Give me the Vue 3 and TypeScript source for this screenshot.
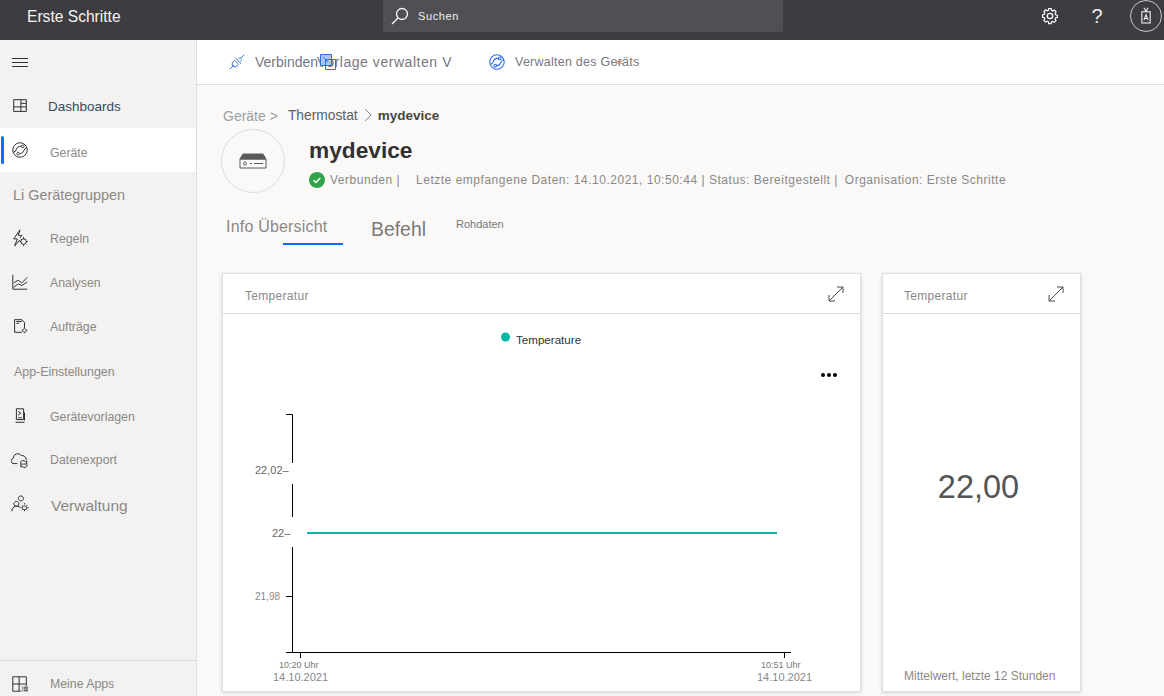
<script setup lang="ts">
interface NavItem {
	label: string;
	kind: "link" | "group" | "section";
	active?: boolean;
	labelClass?: string;
	icon?: string[];
}

const navItems: NavItem[] = [
	{
		label: "Dashboards",
		kind: "link",
		labelClass: "nav-dark",
		icon: ["M3 3h14v13H3z", "M3 11h14", "M11 3v13", "M11 7h6"],
	},
	{
		label: "Geräte",
		kind: "link",
		active: true,
		labelClass: "nav-active",
		icon: [
			"M10 2a8 8 0 1 0 .01 0",
			"M2.500 12.500c4.500 0 2.500-6.500 7-6.500h2",
			"M17.500 7.500c-4 0-2.500 6.500-7 6.500h-1",
			"M13 4.500a1.500 1.500 0 1 0 .01 0",
			"M8 12.500a1.500 1.500 0 1 0 .01 0",
		],
	},
	{ label: "Li Gerätegruppen", kind: "group" },
	{
		label: "Regeln",
		kind: "link",
		icon: ["M10 1L3 11h4l-3 8 6-7", "M10 1L8 7h4l-2 3", "M14 11a3 3 0 1 0 .01 0", "M14 9v2M14 17v2M9.500 14h2M16.500 14h2M11 11l1 1M16 16l1 1M17 11l-1 1M11 17l1-1"],
	},
	{
		label: "Analysen",
		kind: "link",
		icon: ["M2 2v16h16", "M3 11l5-3 4 3 6-6", "M3 16l5-4 4 2 6-4"],
	},
	{
		label: "Aufträge",
		kind: "link",
		icon: ["M4 17V3h8l3 3v6", "M4 17h8", "M6 5h6M6 7h3", "M15 13a2 2 0 1 0 .01 0", "M15 11v1M15 17v1M12 15h1M17 15h1"],
	},
	{ label: "App-Einstellungen", kind: "section" },
	{
		label: "Gerätevorlagen",
		kind: "link",
		labelClass: "nav-shift",
		icon: ["M6 2h8v12H6z", "M5 17h10", "M8 5l3 2-3 2", "M8 12h4", "M15 6v9"],
	},
	{
		label: "Datenexport",
		kind: "link",
		labelClass: "nav-export",
		icon: ["M7 14H4a3 3 0 0 1-1.500-6 5 5 0 0 1 9-3 5 5 0 0 1 5.500 5", "M10.500 14a3 3 0 0 1 5.500-2l1.500-1v3.500h-3", "M18 15a3 3 0 0 1-5.500 2l-1.500 1v-3.500h3"],
	},
	{
		label: "Verwaltung",
		kind: "link",
		labelClass: "nav-big",
		icon: ["M6 7a2.800 2.800 0 1 0 .01 0", "M1 18c0-6 7-7 9-4", "M11 1a2.800 2.800 0 1 0 .01 0", "M15 12a2.200 2.200 0 1 0 .01 0", "M15 9v1.500M15 16.500V18M10.500 14H12M18 14h1.500M12 11l1 1M17 16l1 1M18 11l-1 1M12 17l1-1"],
	},
];

const statusParts = ["Letzte empfangene Daten: 14.10.2021, 10:50:44", "Status: Bereitgestellt"];
</script>

<template>
	<div class="page">
		<header class="topbar">
			<div class="brand">Erste Schritte</div>
			<div class="search">
				<svg class="search-icon" viewBox="0 0 20 20">
					<circle cx="12" cy="8" r="5.500" />
					<path d="M8 12l-6 6" />
				</svg>
				<span>Suchen</span>
			</div>
			<div class="top-actions">
				<svg class="gear" viewBox="0 0 20 20">
					<path d="M8.500 2h3l.5 2.300 1.500.7 2-1.200 2 2.200-1.200 2 .6 1.500 2.100.5v3l-2.200.5-.6 1.500 1.200 2-2.100 2-2-1.200-1.500.6-.5 2.200h-3L8 18l-1.500-.6-2 1.200-2.100-2 1.200-2-.6-1.500L.9 12.600v-3L3 9.100l.6-1.500-1.200-2 2.100-2.100 2 1.200L8 4z" transform="translate(1 0) scale(.9)" />
					<circle cx="10" cy="10" r="3" />
				</svg>
				<span class="help">?</span>
				<div class="avatar">
					<svg viewBox="0 0 20 26">
						<path d="M4 7h12v16H4z" />
						<path d="M7 1l3 5 3-5" />
						<path d="M7 19l3-8 3 8M8 16.500h4" />
					</svg>
				</div>
			</div>
		</header>

		<div class="body">
			<aside class="sidebar">
				<div class="nav-list">
					<div class="hamburger"><span></span><span></span><span></span></div>
					<div
						v-for="item in navItems"
						:key="item.label"
						class="nav-row"
						:class="[item.kind, { active: item.active }]"
					>
						<i v-if="item.active" class="active-bar"></i>
						<svg v-if="item.icon" class="nav-icon" viewBox="0 0 20 20">
							<path v-for="d in item.icon" :key="d" :d="d" />
						</svg>
						<span class="nav-label" :class="item.labelClass">{{ item.label }}</span>
					</div>
				</div>
				<div class="nav-row link my-apps">
					<svg class="nav-icon" viewBox="0 0 20 20">
						<path d="M2 2h15v16H2zM2 10h15M9 2v16" />
						<path class="knock" d="M11 12h9v8h-9z" />
						<path d="M12 13.500h1M14 13.500h5M12 15.500h1M14 15.500h5M12 17.500h1M14 17.500h5" />
					</svg>
					<span class="nav-label nav-apps">Meine Apps</span>
				</div>
			</aside>

			<main class="content">
				<div class="toolbar">
					<div class="tool tool-connect">
						<svg class="tool-icon" viewBox="0 0 20 20">
							<path d="M1 19l5-5M14 6l5-5M7 8l5 5-2 2a3.500 3.500 0 0 1-5-5zM8 5l7 7M12 6l2-2M14 9l2-2" />
						</svg>
						<span>Verbinden</span>
						<svg class="overlap-icon" viewBox="0 0 16 16">
							<path class="fill-blue" d="M.5.500h11v11H.5z" />
							<path d="M5.500 5.500h10v10h-10zM3 3l5 5" />
						</svg>
						<span class="tool-tight">Vorlage verwalten V</span>
					</div>
					<div class="tool tool-manage">
						<svg class="tool-icon manage-icon" viewBox="0 0 20 20">
							<circle cx="10" cy="10" r="8" />
							<path d="M2.500 12.500c4.500 0 2.500-6.500 7-6.500h2M17.500 7.500c-4 0-2.500 6.500-7 6.500h-1" />
							<circle cx="13" cy="6" r="1.500" />
							<circle cx="8" cy="14" r="1.500" />
						</svg>
						<span class="spaced">Verwalten des Geräts</span>
						<svg class="cross" viewBox="0 0 10 10"><path d="M1 3l8 4M1 7l8-4" /></svg>
					</div>
				</div>

				<div class="device">
					<div class="crumbs">
						<span class="crumb-root">Geräte &gt;</span>
						<span class="crumb-mid">Thermostat</span>
						<svg class="chevron" viewBox="0 0 8 14"><path d="M1 1l6 6-6 6" /></svg>
						<strong>mydevice</strong>
					</div>

					<div class="device-head">
						<div class="device-circle">
							<svg viewBox="0 0 28 16">
								<path class="device-top" d="M4 1h20l3 5H1z" />
								<path d="M1 6h26v9H1z" />
								<circle cx="6" cy="10.500" r="1.500" />
								<path d="M11 10.500h2M15 10.500h9" />
							</svg>
						</div>
						<div class="device-info">
							<h1>mydevice</h1>
							<div class="status">
								<svg class="check" viewBox="0 0 16 16">
									<circle cx="8" cy="8" r="8" />
									<path d="M4.500 8.300l2.400 2.200 4.400-4.500" />
								</svg>
								<span class="status-connected">Verbunden |</span>
								<span class="status-rest">
									<template v-for="part in statusParts" :key="part">{{ part }} | </template>
									<span class="status-org">Organisation: Erste Schritte</span>
								</span>
							</div>
						</div>
					</div>

					<div class="tabs">
						<div class="tab-info">
							<span>Info Übersicht</span>
							<i></i>
						</div>
						<span class="tab-cmd">Befehl</span>
						<span class="tab-raw">Rohdaten</span>
					</div>
				</div>

				<div class="cards">
					<section class="card card-chart">
						<div class="card-head">
							<span>Temperatur</span>
							<svg class="expand" viewBox="0 0 16 16"><path d="M1 15L15 1M9 1h6v6M1 9v6h6" /></svg>
						</div>
						<div class="chart-body">
							<svg class="chart" viewBox="1 0 636 378" width="636" height="378">
								<circle cx="283.500" cy="23" r="4.500" fill="#00b7a8" />
								<text x="294" y="30" class="legend">Temperature</text>
								<g fill="#000">
									<circle cx="601" cy="61" r="2" />
									<circle cx="607" cy="61" r="2" />
									<circle cx="613" cy="61" r="2" />
								</g>
								<g stroke="#000" stroke-width="1" fill="none">
									<path d="M64 100.500h6.500V149M70.500 170v33M70.500 233v105M64 282.500h6M64 338.500h505M78.500 338v6M562.500 338v6" />
								</g>
								<path d="M85 219h470" stroke="#00b7a8" stroke-width="2" />
								<text x="33" y="160" class="tick">22,02–</text>
								<text x="50" y="223" class="tick">22–</text>
								<text x="33" y="286" class="tick-small">21,98</text>
								<text x="57" y="354" class="time">10:20 Uhr</text>
								<text x="51" y="367" class="date">14.10.2021</text>
								<text x="539" y="354" class="time">10:51 Uhr</text>
								<text x="535" y="367" class="date">14.10.2021</text>
							</svg>
						</div>
					</section>

					<section class="card card-kpi">
						<div class="card-head">
							<span>Temperatur</span>
							<svg class="expand" viewBox="0 0 16 16"><path d="M1 15L15 1M9 1h6v6M1 9v6h6" /></svg>
						</div>
						<div class="kpi-value">22,00</div>
						<div class="kpi-foot">Mittelwert, letzte 12 Stunden</div>
					</section>
				</div>
			</main>
		</div>
	</div>
</template>

<style scoped>
.page {
	width: 1164px;
	height: 696px;
	overflow: hidden;
	display: flex;
	flex-direction: column;
	font-family: "Liberation Sans", Arial, sans-serif;
	color: #605e5c;
}

.topbar {
	height: 40px;
	flex: none;
	display: flex;
	align-items: flex-start;
	background: #3c3c41;
	color: #fff;
}

.brand {
	width: 383px;
	padding-left: 27px;
	box-sizing: border-box;
	font-size: 15.600px;
	line-height: 33px;
	color: #f4f4f4;
}

.search {
	width: 400px;
	height: 32px;
	display: flex;
	align-items: center;
	background: #4f4f54;
	border-radius: 0 0 2px 2px;
	font-size: 11px;
	letter-spacing: 0.6px;
	color: #f2f2f2;
}

.search-icon {
	width: 20px;
	height: 20px;
	margin: 0 8px 0 7px;
	fill: none;
	stroke: #fff;
	stroke-width: 1.300;
}

.top-actions {
	margin-left: auto;
	height: 32px;
	display: flex;
	align-items: center;
}

.gear {
	width: 18px;
	height: 18px;
	fill: none;
	stroke: #fff;
	stroke-width: 1.400;
}

.help {
	width: 16px;
	margin-left: 30px;
	text-align: center;
	font-size: 20px;
	font-weight: 400;
	color: #eee;
}

.avatar {
	width: 32px;
	height: 32px;
	margin: 0 2px 0 25px;
	box-sizing: border-box;
	border: 1px solid #c8c8c8;
	border-radius: 50%;
	display: flex;
	align-items: center;
	justify-content: center;
}

.avatar svg {
	width: 14px;
	height: 18px;
	fill: none;
	stroke: #fff;
	stroke-width: 1.500;
}

.body {
	flex: 1;
	display: flex;
	min-height: 0;
}

.sidebar {
	width: 197px;
	flex: none;
	box-sizing: border-box;
	display: flex;
	flex-direction: column;
	justify-content: space-between;
	background: #f3f2f1;
	border-right: 1px solid #e1dfdd;
}

.hamburger {
	height: 44px;
	padding-left: 12px;
	display: flex;
	flex-direction: column;
	justify-content: center;
	gap: 3px;
}

.hamburger span {
	width: 16px;
	height: 1px;
	background: #323130;
}

.nav-row {
	position: relative;
	height: 44px;
	display: flex;
	align-items: center;
	font-size: 12.300px;
	color: #8a8886;
}

.nav-row.active {
	background: #fff;
}

.active-bar {
	position: absolute;
	left: 1px;
	top: 8px;
	width: 3px;
	height: 28px;
	border-radius: 2px;
	background: #0f6cff;
}

.nav-row.group {
	padding-left: 13px;
	font-size: 14.400px;
}

.nav-row.section {
	padding-left: 14px;
	height: 46px;
	font-size: 12.400px;
}

.nav-row.group .nav-label,
.nav-row.section .nav-label {
	margin-left: 0;
}

.nav-icon {
	width: 18px;
	height: 18px;
	margin-left: 11px;
	flex: none;
	fill: none;
	stroke: #2f2e2d;
	stroke-width: 1.100;
}

.nav-label {
	margin-left: 21px;
	padding-top: 2px;
}

.nav-dark {
	margin-left: 19px;
	padding-top: 0;
	font-size: 13.500px;
	color: #3a4a5c;
}

.nav-shift {
	margin-left: 21px;
}

.nav-export {
	margin-left: 21px;
	padding-top: 0;
}

.nav-active {
	margin-left: 21px;
	padding-top: 6px;
}

.nav-apps {
	margin-left: 21px;
	padding-top: 0;
}

.nav-big {
	margin-left: 22px;
	padding-top: 4px;
	font-size: 15.500px;
}

.my-apps {
	border-top: 1px solid #dcdbd9;
	height: 36px;
	box-sizing: border-box;
	padding-top: 10px;
}

.knock {
	fill: #f3f2f1;
	stroke: none;
}

.content {
	flex: 1;
	min-width: 0;
	background: #faf9f8;
}

.toolbar {
	height: 45px;
	box-sizing: border-box;
	display: flex;
	align-items: center;
	background: #fff;
	border-bottom: 1px solid #dddcdb;
	font-size: 14px;
	color: #77767f;
}

.tool {
	position: relative;
	display: flex;
	align-items: center;
}

.tool-connect {
	margin-left: 32px;
	width: 259px;
}

.tool-icon {
	width: 16px;
	height: 16px;
	margin-right: 10px;
	fill: none;
	stroke: #2b6fe0;
	stroke-width: 1.200;
}

.overlap-icon {
	position: absolute;
	left: 91px;
	top: 0;
	width: 16px;
	height: 16px;
	fill: none;
	stroke: #2b6fe0;
	stroke-width: 1;
}

.fill-blue {
	fill: #a9c6f5;
}

.tool-tight {
	margin-left: -1px;
	letter-spacing: 0.550px;
}

.manage-icon {
	width: 18px;
	height: 18px;
	margin-right: 9px;
}

.spaced {
	font-size: 12.500px;
	letter-spacing: 0.250px;
}

.cross {
	position: absolute;
	left: 127px;
	top: 5px;
	width: 9px;
	height: 9px;
	fill: none;
	stroke: #e07a35;
	stroke-width: 1;
}

.device {
	padding: 22px 0 0 26px;
}

.crumbs {
	height: 18px;
	display: flex;
	align-items: center;
	font-size: 13.500px;
}

.crumb-root {
	font-size: 14px;
	color: #a19f9d;
	margin-right: 10px;
}

.crumb-mid {
	margin-top: -2px;
	font-size: 13.800px;
}

.chevron {
	width: 8px;
	height: 14px;
	margin: -2px 6px 0;
	fill: none;
	stroke: #8a8886;
}

.crumbs strong {
	margin-top: -2px;
	color: #484644;
}

.device-head {
	display: flex;
	margin: 4px 0 0 -2px;
}

.device-circle {
	width: 64px;
	height: 64px;
	flex: none;
	box-sizing: border-box;
	border: 1px solid #dedcda;
	border-radius: 50%;
	display: flex;
	align-items: center;
	justify-content: center;
}

.device-circle svg {
	width: 28px;
	height: 16px;
	fill: none;
	stroke: #5c5a58;
	stroke-width: 1;
}

.device-top {
	fill: #5c5a58;
}

.device-info {
	margin-left: 24px;
}

.device-info h1 {
	margin: 5px 0 0;
	font-size: 22.700px;
	line-height: 32px;
	font-weight: 600;
	color: #323130;
}

.status {
	display: flex;
	align-items: center;
	height: 16px;
	margin-top: 6px;
	font-size: 12px;
	letter-spacing: 0.520px;
	color: #8a8886;
}

.check {
	width: 16px;
	height: 16px;
	margin-right: 5px;
	fill: #2da44a;
}

.check path {
	fill: none;
	stroke: #fff;
	stroke-width: 1.500;
}

.status-connected {
	width: 86px;
}

.status-org {
	margin-left: 3px;
}

.tabs {
	position: relative;
	display: flex;
	margin-top: 22px;
	height: 32px;
}

.tab-info {
	position: relative;
	width: 145px;
	font-size: 16px;
	line-height: 24px;
	letter-spacing: 0.200px;
	color: #8a8886;
	padding-left: 3px;
}

.tab-info i {
	position: absolute;
	left: 60px;
	top: 28px;
	width: 60px;
	height: 2px;
	background: #0f6cff;
}

.tab-cmd {
	width: 85px;
	font-size: 19.400px;
	line-height: 28px;
	color: #7a7978;
}

.tab-raw {
	font-size: 11px;
	line-height: 18px;
	color: #777;
}

.cards {
	display: flex;
	gap: 21px;
	margin: 26px 0 0 25px;
	height: 419px;
}

.card {
	box-sizing: border-box;
	display: flex;
	flex-direction: column;
	background: #fff;
	border: 1px solid #e1dfdd;
	box-shadow: 0 1px 4px rgba(0, 0, 0, 0.15);
}

.card-chart {
	width: 639px;
}

.card-kpi {
	width: 199px;
}

.card-head {
	height: 40px;
	flex: none;
	box-sizing: border-box;
	padding: 0 16px 0 22px;
	display: flex;
	align-items: center;
	justify-content: space-between;
	border-bottom: 1px solid #dddcdb;
	font-size: 12px;
	letter-spacing: 0.300px;
	color: #8a8886;
}

.card-kpi .card-head {
	padding-left: 21px;
}

.card-head span {
	margin-top: 5px;
}

.expand {
	width: 16px;
	height: 16px;
	fill: none;
	stroke: #4a4a4a;
	stroke-width: 1;
}

.chart-body {
	flex: 1;
}

.chart {
	display: block;
}

.legend {
	font-size: 11.600px;
	fill: #333;
}

.tick {
	font-size: 11px;
	fill: #666;
}

.tick-small {
	font-size: 10px;
	fill: #888;
}

.time {
	font-size: 9px;
	fill: #777;
}

.date {
	font-size: 11px;
	fill: #888;
}

.kpi-value {
	flex: 1;
	padding: 0 6px 8px 0;
	box-sizing: border-box;
	display: flex;
	align-items: center;
	justify-content: center;
	font-size: 32.500px;
	color: #555;
}

.kpi-foot {
	padding: 0 0 8px 21px;
	font-size: 12px;
	line-height: 14px;
	color: #8a8886;
}
</style>

<style>
html,
body {
	margin: 0;
	overflow: hidden;
}
</style>
